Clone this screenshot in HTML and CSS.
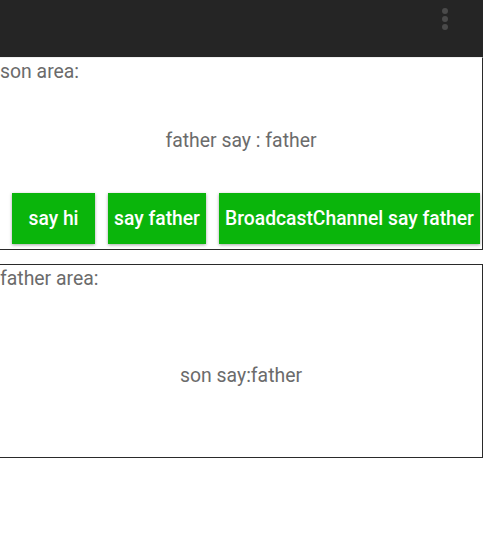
FILE: index.html
```html
<!DOCTYPE html>
<html>
<head>
<meta charset="utf-8">
<link rel="stylesheet" href="styles.css">
</head>
<body>
<header class="topbar">
  <div class="menu"><span class="dot"></span><span class="dot"></span><span class="dot"></span></div>
</header>
<section class="area son">
  <div class="label">son area:</div>
  <div class="msg son-msg">father say : father</div>
  <div class="actions">
    <button class="btn">say hi</button>
    <button class="btn">say father</button>
    <button class="btn">BroadcastChannel say father</button>
  </div>
</section>
<section class="area father">
  <div class="label">father area:</div>
  <div class="msg father-msg">son say:father</div>
</section>
</body>
</html>
```
FILE: styles.css
```css
html, body {
  margin: 0;
  padding: 0;
  background: #fff;
  font-family: Roboto, "Liberation Sans", sans-serif;
  overflow: hidden;
}
.topbar {
  height: 57px;
  background: #252525;
  display: flex;
  justify-content: flex-end;
  align-items: flex-start;
  padding: 8px 35px 0 0;
  box-sizing: border-box;
}
.menu {
  display: flex;
  flex-direction: column;
  gap: 2px;
}
.dot {
  width: 6px;
  height: 6px;
  border-radius: 50%;
  background: #4a4a4a;
}
.area {
  margin-left: -1px;
  width: 484px;
  box-sizing: border-box;
  border: 1px solid #2a2a2a;
  display: flex;
  flex-direction: column;
}
.son {
  border-top: 1px solid #f0f0f0;
  height: 193px;
  padding-top: 3px;
}
.father {
  margin-top: 14px;
  height: 194px;
  padding-top: 3px;
}
.label {
  font-size: 19.4px;
  line-height: 22px;
  color: #6b6b6b;
}
.msg {
  font-size: 19.4px;
  line-height: 22px;
  color: #6b6b6b;
  text-align: center;
}
.son-msg {
  margin-top: 47px;
}
.father-msg {
  margin-top: 75px;
}
.actions {
  display: flex;
  gap: 13px;
  margin-top: 41px;
  padding-left: 12px;
}
.btn {
  height: 51px;
  border: none;
  background: #0ab50b;
  color: #fff;
  font-family: Roboto, "Liberation Sans", sans-serif;
  font-size: 19.3px;
  font-weight: 500;
  padding: 0 4px;
  box-shadow: 0 1px 3px rgba(0,0,0,0.35);
  border-radius: 0;
  white-space: nowrap;
}
.btn:first-child { width: 83px; }
.btn:nth-child(2) { width: 98px; }
.btn:nth-child(3) { width: 261px; }
```
